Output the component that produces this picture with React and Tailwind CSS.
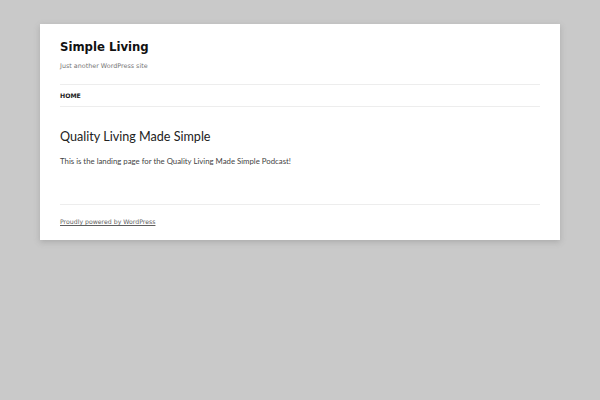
export default function App() {
  return (
    <div className="min-h-[400px] w-full bg-[#c9c9c9] pt-6">
      <div className="mx-auto w-[520px] bg-white px-5 shadow-[0_2px_6px_rgba(100,100,100,0.3)]">
        {/* Header */}
        <header className="pt-[14px] font-['DejaVu_Sans',sans-serif]">
          <h1 className="text-[11.7px] font-bold leading-[18px] text-[#111]">Simple Living</h1>
          <p className="mt-[5px] text-[6.4px] leading-[10px] text-[#757575]">Just another WordPress site</p>
          <nav className="mt-[13px] border-y border-[#ededed] py-[5px] text-[6.2px] font-bold uppercase leading-[11px] text-[#222]">
            <a>Home</a>
          </nav>
        </header>

        {/* Content */}
        <main className="pb-[37px] pt-[21px] font-['Lato',sans-serif]">
          <h2 className="text-[12.6px] leading-[18px] text-[#222]">Quality Living Made Simple</h2>
          <p className="mt-[9px] text-[7.8px] leading-[12px] text-[#444]">
            This is the landing page for the Quality Living Made Simple Podcast!
          </p>
        </main>

        {/* Footer */}
        <footer className="border-t border-[#ededed] pb-[13px] pt-[12px] font-['DejaVu_Sans',sans-serif] text-[6.2px] leading-[10px]">
          <a className="text-[#5e5e5e] underline">Proudly powered by WordPress</a>
        </footer>
      </div>
    </div>
  );
}
